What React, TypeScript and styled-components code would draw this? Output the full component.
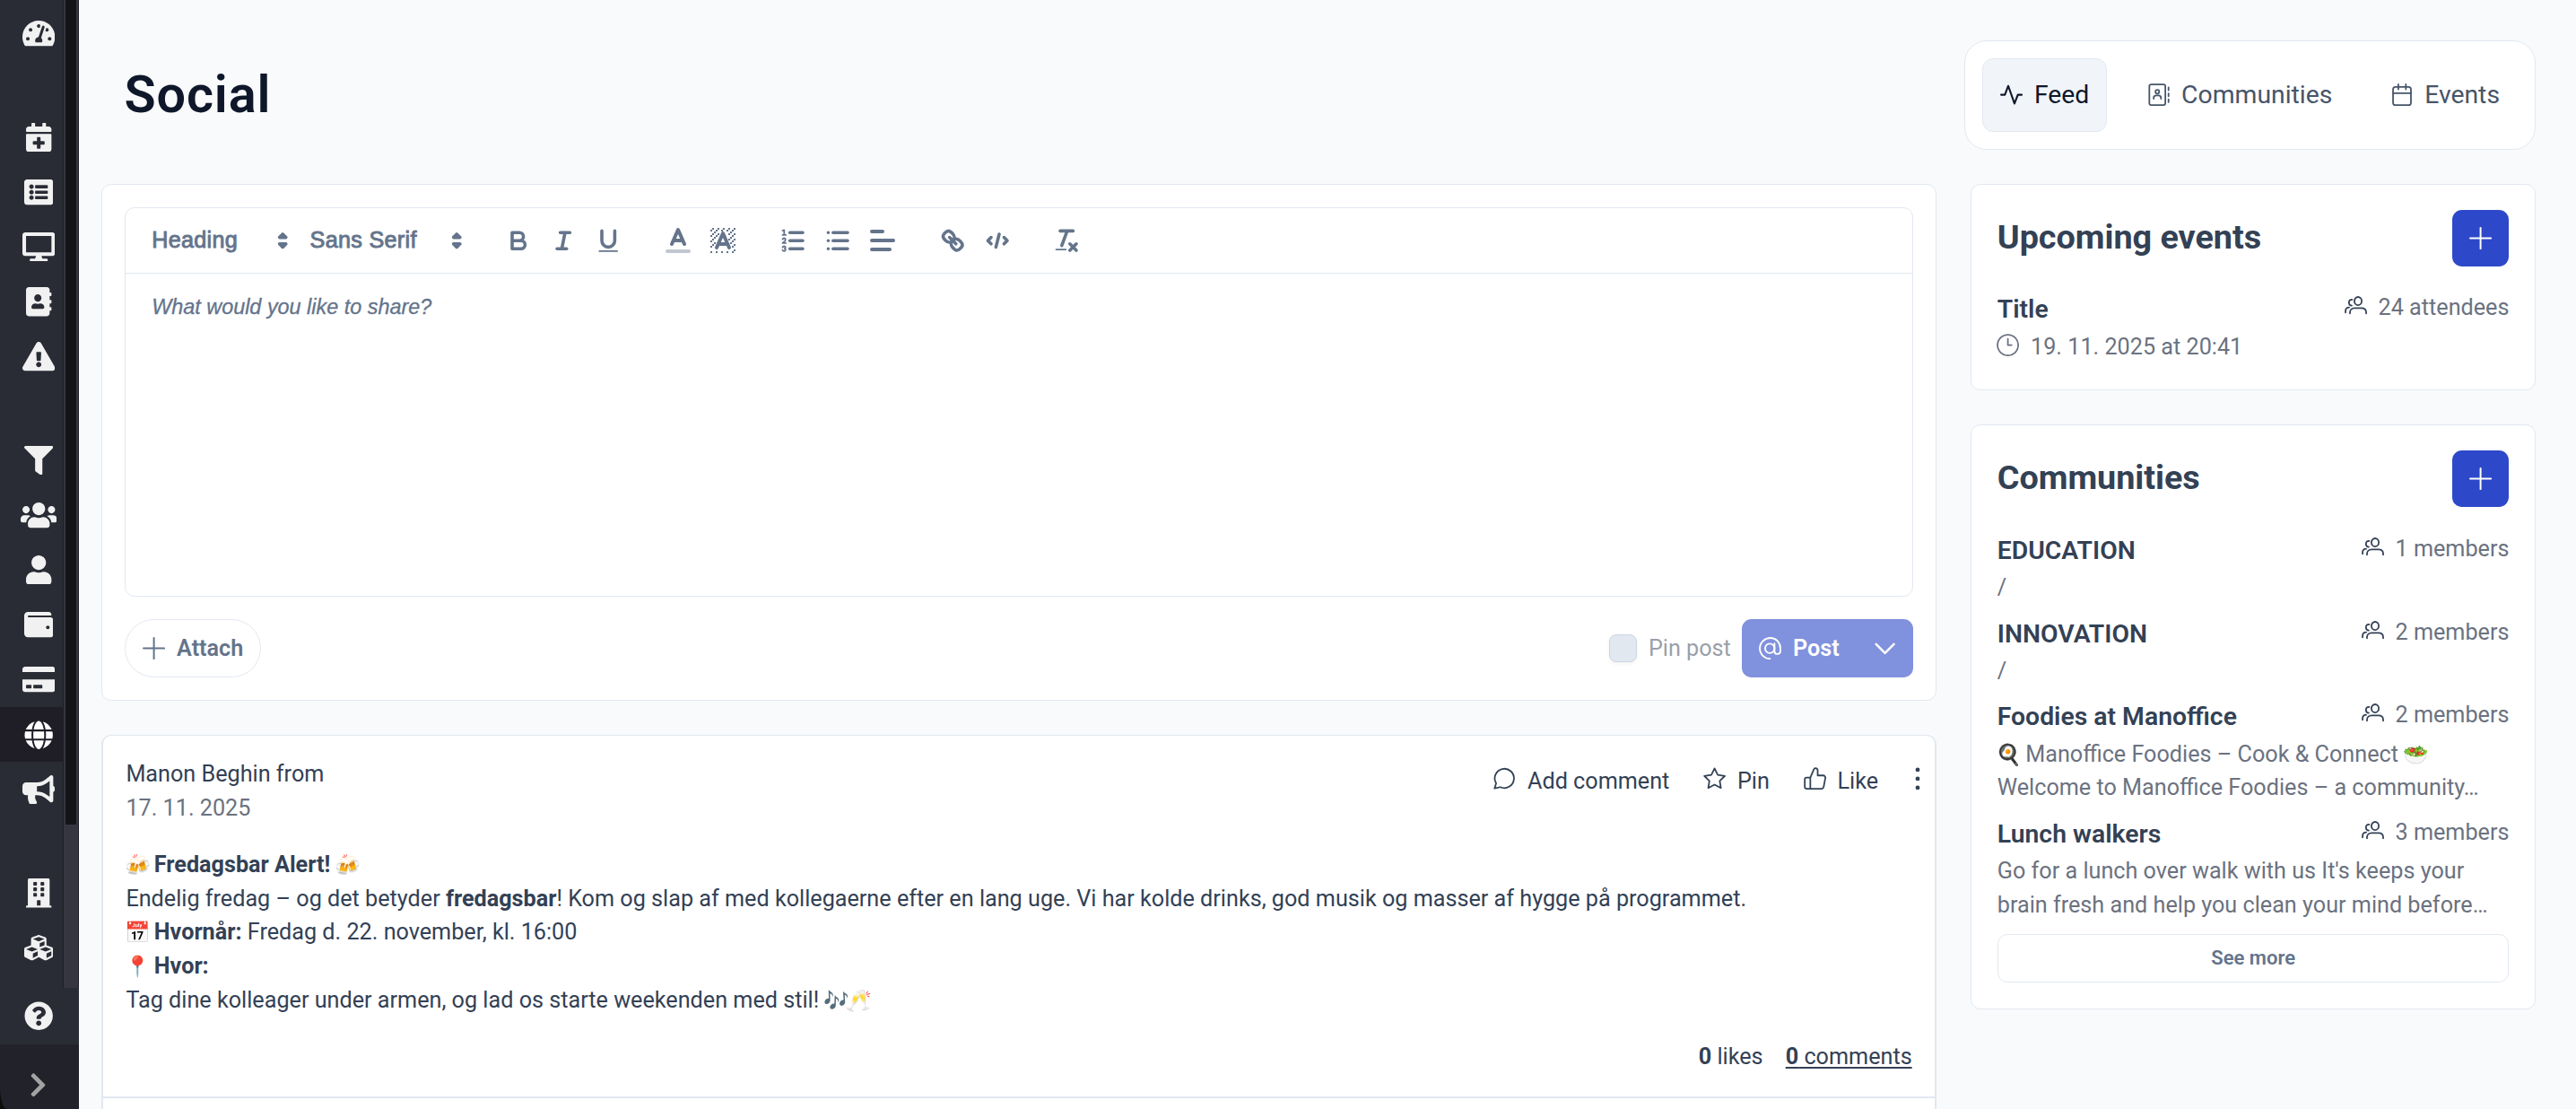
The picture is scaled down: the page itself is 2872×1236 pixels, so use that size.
import React from 'react';
import styled, { createGlobalStyle, css } from 'styled-components';
import {
  FaAddressBook,
  FaBuilding,
  FaBullhorn,
  FaCalendarPlus,
  FaChevronRight,
  FaCreditCard,
  FaCubes,
  FaDesktop,
  FaExclamationTriangle,
  FaFilter,
  FaGlobe,
  FaListAlt,
  FaQuestionCircle,
  FaTachometerAlt,
  FaUser,
  FaUsers,
  FaWallet,
} from 'react-icons/fa';

const GlobalStyle = createGlobalStyle`
  * {
    box-sizing: border-box;
  }
  body {
    margin: 0;
    background: #f8fafc;
    color: #334155;
    font-family: Roboto, 'Liberation Sans', sans-serif;
    font-size: 25.2px;
    line-height: 37.8px;
    overflow: hidden;
  }
  button {
    font-family: inherit;
    font-size: inherit;
    line-height: inherit;
    margin: 0;
  }
`;

const Layout = styled.div`
  display: flex;
  height: 1236px;
  overflow: hidden;
`;

/* Sidebar */

const Sidebar = styled.aside`
  display: flex;
  flex-direction: column;
  width: 88px;
  flex-shrink: 0;
  background: #2a2c35;
  color: #f1f1f1;
`;

const SidebarScroll = styled.div`
  display: flex;
  height: 1101px;
`;

const Nav = styled.nav`
  width: 70px;
  padding-top: 6.8px;
`;

const NavGroup = styled.div`
  margin-bottom: 54.4px;
`;

const navItem = css<{ $width?: number }>`
  display: flex;
  align-items: center;
  justify-content: center;
  padding: 0 0 0 16px;
  border: none;
  background: none;
  color: inherit;
  svg {
    height: 32.4px;
    width: ${({ $width = 32.4 }) => $width}px;
    flex-shrink: 0;
  }
`;

const NavItem = styled.button<{ $active?: boolean; $width?: number }>`
  ${navItem}
  width: 70px;
  height: 61.15px;
  ${({ $active }) => $active && 'background: #1f1e27; color: #fff;'}
`;

const Scrollbar = styled.div`
  width: 18px;
  padding: 0 3px 0 2px;
  background: #363641;
  border-left: 1px solid #1f1e27;
  border-right: 1px solid #1f1e27;
`;

const ScrollThumb = styled.div`
  width: 12px;
  height: 918.5px;
  background: #131418;
`;

const HelpItem = styled.button<{ $width?: number }>`
  ${navItem}
  width: 70px;
  height: 63px;
`;

const SidebarFooter = styled.div`
  background: #0d0d0c;
`;

const ExpandItem = styled.button`
  display: flex;
  align-items: center;
  padding: 19px 0 0 33px;
  width: 88px;
  height: 72px;
  border: none;
  background: #22222b;
  color: #a3a3a3;
  border-bottom-left-radius: 8px 24px;
  svg {
    width: 19px;
    height: 30.6px;
  }
`;

/* Page */

const Page = styled.main`
  flex: 1;
  padding: 45.4px 45.2px 0 25.2px;
`;

const PageHeader = styled.header`
  display: flex;
  align-items: center;
  justify-content: space-between;
  height: 121.2px;
  margin-bottom: 38.6px;
  padding-left: 25.2px;
`;

const PageTitle = styled.h1`
  margin: 0;
  color: #0f172a;
  font-size: 57.6px;
  font-weight: 600;
  line-height: 72px;
  letter-spacing: 0.9px;
`;

const Tabs = styled.div`
  display: flex;
  gap: 25.2px;
  height: 121.2px;
  padding: 18.9px;
  background: #fff;
  border: 1px solid #e2e8f0;
  border-radius: 25px;
`;

const Tab = styled.button<{ $active?: boolean }>`
  display: flex;
  align-items: center;
  gap: 12.6px;
  padding: 0 18.9px;
  border: 1px solid ${({ $active }) => ($active ? '#e2e8f0' : 'transparent')};
  border-radius: 12px;
  background: ${({ $active }) => ($active ? '#f1f5f9' : 'transparent')};
  color: ${({ $active }) => ($active ? '#0f172a' : '#475569')};
  font-size: 28.35px;
`;

const Columns = styled.div`
  display: flex;
  align-items: flex-start;
  gap: 38.6px;
`;

const FeedColumn = styled.div`
  flex: 1;
  min-width: 0;
`;

const SideColumn = styled.div`
  width: 629.4px;
  flex-shrink: 0;
  display: flex;
  flex-direction: column;
  gap: 38.6px;
`;

const Card = styled.section`
  background: #fff;
  border: 1px solid #e2e8f0;
  border-radius: 10.8px;
`;

/* Composer */

const Composer = styled(Card)`
  padding: 25.2px;
  margin-bottom: 38px;
`;

const Editor = styled.div`
  border: 1px solid #e2e8f0;
  border-radius: 10.8px;
  height: 433.5px;
  font-family: 'Liberation Sans', Arial, sans-serif;
  color: #64748b;
`;

const Toolbar = styled.div`
  display: flex;
  align-items: center;
  gap: 27px;
  height: 73px;
  padding: 0 14.4px;
  border-bottom: 1px solid #e2e8f0;
`;

const ToolGroup = styled.div`
  display: flex;
`;

const Picker = styled.div<{ $width: number }>`
  display: flex;
  align-items: center;
  justify-content: space-between;
  width: ${({ $width }) => $width}px;
  padding-left: 14.4px;
  letter-spacing: 0.3px;
  line-height: 36px;
  -webkit-text-stroke: 0.9px #64748b;
  svg {
    width: 32.4px;
    height: 32.4px;
  }
`;

const PickerLabel = styled.span`
  padding-bottom: 3.5px;
`;

const Tool = styled.button<{ $large?: boolean }>`
  display: flex;
  align-items: center;
  justify-content: center;
  width: 50.4px;
  height: 43.2px;
  padding: 0;
  border: none;
  background: none;
  color: inherit;
  svg {
    width: ${({ $large }) => ($large ? 36 : 32.4)}px;
    height: ${({ $large }) => ($large ? 36 : 32.4)}px;
  }
`;

const Placeholder = styled.div`
  padding: 19px 28.8px;
  font-size: 23.4px;
  font-style: italic;
  -webkit-text-stroke: 0.3px #64748b;
`;

const ComposerFooter = styled.div`
  display: flex;
  align-items: center;
  justify-content: space-between;
  margin-top: 25.2px;
`;

const AttachButton = styled.button`
  display: flex;
  align-items: center;
  gap: 12.6px;
  height: 64.8px;
  padding: 0 18.9px;
  border: 1px solid #e2e8f0;
  border-radius: 33px;
  background: #fff;
  color: #64748b;
  font-weight: 600;
`;

const Publish = styled.div`
  display: flex;
  align-items: center;
  gap: 12.6px;
`;

const Checkbox = styled.span`
  width: 31.5px;
  height: 31.5px;
  border: 1px solid #cbd5e1;
  border-radius: 8px;
  background: #e2e8f0;
  box-shadow: 0 2px 4px rgba(18, 18, 23, 0.05);
`;

const PinLabel = styled.label`
  color: #9a9fa9;
`;

const SplitButton = styled.div`
  display: flex;
  height: 64.8px;
  border-radius: 10.8px;
  background: #8091dd;
  color: #fff;
  font-weight: 600;
`;

const PostButton = styled.button`
  display: flex;
  align-items: center;
  gap: 12.6px;
  padding: 0 18.9px;
  border: none;
  background: none;
  color: inherit;
  font-weight: inherit;
`;

const PostMenuButton = styled.button`
  display: flex;
  align-items: center;
  justify-content: center;
  width: 63px;
  padding: 0;
  border: none;
  background: none;
  color: inherit;
`;

/* Feed post */

const PostCard = styled(Card)`
  border-width: 1px 2px;
  border-bottom: none;
  border-radius: 10.8px 10.8px 0 0;
`;

const PostBody = styled.div`
  height: 404px;
  padding: 24px 25.2px 0;
  border-bottom: 2px solid #e2e8f0;
`;

const PostHead = styled.div`
  display: flex;
  justify-content: space-between;
  margin-bottom: 25.2px;
`;

const Muted = styled.div`
  color: #6b7280;
`;

const PostActions = styled.div`
  display: flex;
  align-items: flex-start;
  gap: 37.8px;
  padding-top: 4.5px;
  margin-right: -13.2px;
`;

const PostAction = styled.button`
  display: flex;
  gap: 12.6px;
  height: 46px;
  padding: 3px 0 0;
  border: none;
  background: none;
  color: inherit;
  svg {
    margin-top: 3px;
  }
`;

const MoreButton = styled(PostAction)`
  width: 13px;
  justify-content: center;
`;

const PostText = styled.div`
  strong {
    font-weight: 700;
  }
`;

const EmojiBox = styled.span`
  display: inline-block;
  width: 25.2px;
  font-size: 23px;
  line-height: 24px;
  text-indent: -1.5px;
  white-space: nowrap;
`;

const PostStats = styled.div`
  display: flex;
  justify-content: flex-end;
  gap: 25.2px;
  margin-top: 25.2px;
  a {
    text-decoration: underline;
    text-decoration-thickness: 2px;
    text-underline-offset: 3px;
  }
`;

/* Side widgets */

const Widget = styled(Card)`
  padding: 27.9px 28.35px 28.35px;
`;

const WidgetHeader = styled.div`
  display: flex;
  align-items: center;
  justify-content: space-between;
  margin-bottom: 27.4px;
`;

const WidgetTitle = styled.h2`
  margin: 0;
  padding-bottom: 3px;
  font-size: 37.8px;
  font-weight: 700;
  line-height: 56px;
  letter-spacing: -0.05px;
`;

const AddButton = styled.button`
  display: flex;
  align-items: center;
  justify-content: center;
  width: 63px;
  height: 63px;
  padding: 0;
  border: none;
  border-radius: 10.8px;
  background: #2d49c9;
  color: #fff;
`;

const Entry = styled.div`
  & + & {
    margin-top: 11.9px;
  }
`;

const EntryHead = styled.div`
  display: flex;
  align-items: flex-start;
  justify-content: space-between;
  height: 43.2px;
`;

const EntryTitle = styled.h3`
  margin: 0;
  font-size: 28.35px;
  font-weight: 600;
  line-height: 42.5px;
`;

const EntryCount = styled.div`
  display: flex;
  gap: 12.6px;
  color: #6b7280;
  svg {
    color: #334155;
    margin-top: 5px;
  }
`;

const EntryText = styled.div`
  color: #6b7280;
  white-space: pre-line;
`;

const EntryDate = styled.div`
  display: flex;
  gap: 12.6px;
  margin-left: -0.5px;
  color: #6b7280;
  svg {
    margin-top: 4px;
  }
`;

const SeeMore = styled.button`
  display: block;
  width: 100%;
  height: 54px;
  margin-top: 13.4px;
  border: 1px solid #e2e8f0;
  border-radius: 10.8px;
  background: #fff;
  color: #64748b;
  font-size: 22.05px;
  font-weight: 600;
`;

/* Line icons, drawn on a 24 unit grid */

type IconProps = { children: React.ReactNode; width?: number };

const Icon: React.FC<IconProps> = ({ children, width = 1.7 }) => (
  <svg
    width="25.2"
    height="25.2"
    viewBox="0 0 24 24"
    fill="none"
    stroke="currentColor"
    strokeWidth={width}
    strokeLinecap="round"
    strokeLinejoin="round"
  >
    {children}
  </svg>
);

const PlusIcon = () => (
  <Icon width={1.9}>
    <path d="M12 1v22M1 12h22" />
  </Icon>
);

const ActivityIcon = () => (
  <Icon width={2}>
    <path d="M1 12h4l3.6-9.4 6.6 18.8L18.8 12H23" />
  </Icon>
);

const ContactsIcon = () => (
  <Icon>
    <rect x="2.2" y="1" width="17" height="22" rx="2" />
    <circle cx="10.7" cy="8.8" r="2" />
    <path d="M6.8 16.2v-.7c0-1.7 1.3-2.7 2.8-2.7h2.2c1.5 0 2.8 1 2.8 2.7v.7M22.6 4.2v3M22.6 10.5v3M22.6 16.8v3" />
  </Icon>
);

const CalendarIcon = () => (
  <Icon>
    <rect x="2.9" y="3.6" width="19" height="19.4" rx="2.6" />
    <path d="M2.900 10.400h19M8.500 .9v5.400M16.500 .9v5.400" />
  </Icon>
);

const PeopleIcon = () => (
  <Icon>
    <ellipse cx="14.3" cy="6.2" rx="3.9" ry="4.3" />
    <path d="M5.7 19.4v-1c0-3 2.2-4.8 5-4.8h7.2c2.9 0 5 1.8 5 4.8v1" />
    <path d="M8 4.7C6 4.7 4.6 6 4.6 7.9S6 11 7.6 11M1 18.4v-1.6c0-2.3 1.5-3.8 3.8-3.8" />
  </Icon>
);

const ClockIcon = () => (
  <Icon>
    <circle cx="12" cy="12" r="11" />
    <path d="M12 5.4V12h4" />
  </Icon>
);

const AtIcon = () => (
  <Icon width={1.8}>
    <circle cx="11.6" cy="12" r="5" />
    <path d="M16.6 6.8v8.4c0 1.7 1.2 2.8 3 2.8s3.2-1.1 3.2-3V12C22.8 5.6 18.2 1 12.2 1S1 5.700 1 12s4.800 11 10.800 11" />
  </Icon>
);

const ChevronIcon = () => (
  <Icon width={2.4}>
    <path d="M2.500 7.500 12 17l9.500-9.500" />
  </Icon>
);

const CommentIcon = () => (
  <Icon>
    <path d="M1.200 22.600 2.900 17.200A10.200 10.200 0 1 1 7.400 21.200Z" />
  </Icon>
);

const StarIcon = () => (
  <Icon>
    <path d="m12 1.300 3.400 6.900 7.500 1.100-5.400 5.300 1.200 7.500-6.700-3.500-6.700 3.500 1.200-7.500L1.100 9.300l7.500-1.100Z" />
  </Icon>
);

const ThumbIcon = () => (
  <Icon>
    <path d="M7 23H3.200C2 23 1.100 22 1.100 20.800v-7.600C1.100 12 2 11 3.200 11H7M7 23V11l3.700-8.400C11 1.600 11.600 1 12.400 1c1.500 0 2.400 1.200 2.400 2.600V8.800h5.800c1.600 0 2.700 1.400 2.300 3l-1.700 9c-.3 1.300-1.300 2.200-2.600 2.200Z" />
  </Icon>
);

const DotsIcon = () => (
  <svg width="6" height="26" viewBox="0 0 6 26" fill="currentColor">
    <circle cx="3" cy="2.9" r="2.4" />
    <circle cx="3" cy="12.9" r="2.4" />
    <circle cx="3" cy="22.9" r="2.4" />
  </svg>
);

/* Editor icons, drawn on an 18 unit grid */

const Glyph: React.FC<{ children: React.ReactNode }> = ({ children }) => (
  <svg
    viewBox="0 0 18 18"
    fill="none"
    stroke="currentColor"
    strokeWidth="2"
    strokeLinecap="round"
    strokeLinejoin="round"
  >
    {children}
  </svg>
);

const SortArrows = () => (
  <Glyph>
    <path d="M7 11l2 2 2-2ZM7 7l2-2 2 2Z" fill="currentColor" />
  </Glyph>
);

const BoldIcon = () => (
  <Glyph>
    <path d="M5 4h4.500a2.500 2.500 0 0 1 0 5H5ZM5 9h5.500a2.500 2.500 0 0 1 0 5H5Z" />
  </Glyph>
);

const ItalicIcon = () => (
  <Glyph>
    <path d="M7 4h6M5 14h6M8 14l2-10" />
  </Glyph>
);

const UnderlineIcon = () => (
  <Glyph>
    <path d="M5 3v6a4 4 0 0 0 8 0V3" />
    <rect x="3" y="15" width="12" height="1" rx="0.5" fill="currentColor" stroke="none" />
  </Glyph>
);

const ColorIcon = () => (
  <Glyph>
    <path d="M3 15h12" opacity="0.4" />
    <path d="M5.500 11 9 3l3.500 8M11.630 9H6.380" />
  </Glyph>
);

// Diagonal hatching, left empty where the letter shape sits
const hatch: [number, number][] = [];
for (let y = 2; y < 16; y += 1) {
  for (let x = 2; x < 16; x += 1) {
    const half = (y - 3) * 0.44 + 1.2;
    const covered = y > 3 && y < 15 && Math.abs(x + 0.5 - 9) < half;
    if ((x + y) % 3 === 2 && !covered) hatch.push([x, y]);
  }
}

const HighlightIcon = () => (
  <Glyph>
    {hatch.map(([x, y]) => (
      <rect key={`${x}-${y}`} x={x} y={y} width="1" height="1" fill="currentColor" stroke="none" />
    ))}
    <path d="M5.500 13 9 5l3.500 8M11.630 11H6.380" />
  </Glyph>
);

const OrderedIcon = () => (
  <Glyph>
    <path d="M7 4h8M7 9h8M7 14h8" />
    <path
      strokeWidth="1"
      d="M2.500 5.500h2M2.500 2.800l1-.4v3M4.500 10.500h-2c0-.23 1.850-1.080 1.850-2.230A.96.96 0 0 0 2.500 8.160M2.500 14.850a.96.96 0 0 0 1.850-.11A.7.7 0 0 0 3.750 14a.69.69 0 0 0 .6-.74.96.96 0 0 0-1.850-.1"
    />
  </Glyph>
);

const BulletIcon = () => (
  <Glyph>
    <path d="M6 4h9M6 9h9M6 14h9M3 4h0M3 9h0M3 14h0" />
  </Glyph>
);

const AlignIcon = () => (
  <Glyph>
    <path d="M3 9h12M3 14h10M3 4h6" />
  </Glyph>
);

const LinkIcon = () => (
  <Glyph>
    <path d="M7 7l4 4" />
    <path d="M8.900 4.577a3.476 3.476 0 0 1 .36 4.679A3.476 3.476 0 0 1 4.577 8.900C3.185 7.500 2.035 6.400 4.217 4.217S7.500 3.185 8.900 4.577Z" />
    <path d="M13.423 9.100a3.476 3.476 0 0 0-4.679-.36 3.476 3.476 0 0 0 .36 4.679c1.392 1.392 2.500 2.542 4.679.36S14.815 10.500 13.423 9.100Z" />
  </Glyph>
);

const CodeIcon = () => (
  <Glyph>
    <path d="M5 7 3 9l2 2M13 7l2 2-2 2M10 5 8 13" />
  </Glyph>
);

const CleanIcon = () => (
  <Glyph>
    <path d="M5 3h8M6 12l3.350-9M11 11l4 4M15 11l-4 4" />
    <rect x="2" y="14" width="7" height="1" rx="0.5" fill="currentColor" stroke="none" />
  </Glyph>
);

const Emoji: React.FC<{ children: string }> = ({ children }) => <EmojiBox>{children}</EmojiBox>;

const navGroups = [
  [{ icon: FaTachometerAlt, width: 36.4 }],
  [
    { icon: FaCalendarPlus },
    { icon: FaListAlt },
    { icon: FaDesktop, width: 36.4 },
    { icon: FaAddressBook },
    { icon: FaExclamationTriangle, width: 36.4 },
  ],
  [
    { icon: FaFilter },
    { icon: FaUsers, width: 40.5 },
    { icon: FaUser },
    { icon: FaWallet },
    { icon: FaCreditCard, width: 36.4 },
    { icon: FaGlobe, active: true },
    { icon: FaBullhorn, width: 36.4 },
  ],
  [{ icon: FaBuilding }, { icon: FaCubes }],
] as { icon: React.ComponentType; width?: number; active?: boolean }[][];

const tools = [
  [BoldIcon, ItalicIcon, UnderlineIcon],
  [ColorIcon, HighlightIcon],
  [OrderedIcon, BulletIcon, AlignIcon],
  [LinkIcon, CodeIcon],
  [CleanIcon],
];

const largeTools = [ColorIcon, HighlightIcon, AlignIcon];

const communities = [
  { name: 'EDUCATION', members: 1, text: '/' },
  { name: 'INNOVATION', members: 2, text: '/' },
  {
    name: 'Foodies at Manoffice',
    members: 2,
    text: (
      <>
        <Emoji>🍳</Emoji> Manoffice Foodies – Cook &amp; Connect <Emoji>🥗</Emoji>
        <br />
        Welcome to Manoffice Foodies – a community…
      </>
    ),
  },
  {
    name: 'Lunch walkers',
    members: 3,
    text: "Go for a lunch over walk with us It's keeps your\nbrain fresh and help you clean your mind before…",
  },
];

const App: React.FC = () => (
  <>
    <GlobalStyle />
    <Layout>
      <Sidebar>
        <SidebarScroll>
          <Nav>
            {navGroups.map((group, index) => (
              <NavGroup key={index}>
                {group.map(({ icon: NavIcon, width, active }, i) => (
                  <NavItem key={i} $active={active} $width={width}>
                    <NavIcon />
                  </NavItem>
                ))}
              </NavGroup>
            ))}
          </Nav>
          <Scrollbar>
            <ScrollThumb />
          </Scrollbar>
        </SidebarScroll>
        <HelpItem>
          <FaQuestionCircle />
        </HelpItem>
        <SidebarFooter>
          <ExpandItem>
            <FaChevronRight />
          </ExpandItem>
        </SidebarFooter>
      </Sidebar>

      <Page>
        <PageHeader>
          <PageTitle>Social</PageTitle>
          <Tabs>
            <Tab $active>
              <ActivityIcon />
              Feed
            </Tab>
            <Tab>
              <ContactsIcon />
              Communities
            </Tab>
            <Tab>
              <CalendarIcon />
              Events
            </Tab>
          </Tabs>
        </PageHeader>

        <Columns>
          <FeedColumn>
            <Composer>
              <Editor>
                <Toolbar>
                  <ToolGroup>
                    <Picker $width={176.4}>
                      <PickerLabel>Heading</PickerLabel>
                      <SortArrows />
                    </Picker>
                    <Picker $width={194.4}>
                      <PickerLabel>Sans Serif</PickerLabel>
                      <SortArrows />
                    </Picker>
                  </ToolGroup>
                  {tools.map((group, index) => (
                    <ToolGroup key={index}>
                      {group.map((ToolIcon, i) => (
                        <Tool key={i} $large={largeTools.includes(ToolIcon)}>
                          <ToolIcon />
                        </Tool>
                      ))}
                    </ToolGroup>
                  ))}
                </Toolbar>
                <Placeholder>What would you like to share?</Placeholder>
              </Editor>
              <ComposerFooter>
                <AttachButton>
                  <PlusIcon />
                  Attach
                </AttachButton>
                <Publish>
                  <Checkbox />
                  <PinLabel>Pin post</PinLabel>
                  <SplitButton>
                    <PostButton>
                      <AtIcon />
                      Post
                    </PostButton>
                    <PostMenuButton>
                      <ChevronIcon />
                    </PostMenuButton>
                  </SplitButton>
                </Publish>
              </ComposerFooter>
            </Composer>

            <PostCard>
              <PostBody>
                <PostHead>
                  <div>
                    <div>Manon Beghin from</div>
                    <Muted>17. 11. 2025</Muted>
                  </div>
                  <PostActions>
                    <PostAction>
                      <CommentIcon />
                      Add comment
                    </PostAction>
                    <PostAction>
                      <StarIcon />
                      Pin
                    </PostAction>
                    <PostAction>
                      <ThumbIcon />
                      Like
                    </PostAction>
                    <MoreButton>
                      <DotsIcon />
                    </MoreButton>
                  </PostActions>
                </PostHead>
                <PostText>
                  <Emoji>🍻</Emoji> <strong>Fredagsbar Alert!</strong> <Emoji>🍻</Emoji>
                  <br />
                  Endelig fredag – og det betyder <strong>fredagsbar</strong>! Kom og slap af med
                  kollegaerne efter en lang uge. Vi har kolde drinks, god musik og masser af hygge
                  på programmet.
                  <br />
                  <Emoji>📅</Emoji> <strong>Hvornår:</strong> Fredag d. 22. november, kl. 16:00
                  <br />
                  <Emoji>📍</Emoji> <strong>Hvor:</strong>
                  <br />
                  Tag dine kolleager under armen, og lad os starte weekenden med stil!{' '}
                  <Emoji>🎶</Emoji>
                  <Emoji>🥂</Emoji>
                </PostText>
                <PostStats>
                  <span>
                    <b>0</b> likes
                  </span>
                  <a>
                    <b>0</b> comments
                  </a>
                </PostStats>
              </PostBody>
              <PostBody />
            </PostCard>
          </FeedColumn>

          <SideColumn>
            <Widget>
              <WidgetHeader>
                <WidgetTitle>Upcoming events</WidgetTitle>
                <AddButton>
                  <PlusIcon />
                </AddButton>
              </WidgetHeader>
              <Entry>
                <EntryHead>
                  <EntryTitle>Title</EntryTitle>
                  <EntryCount>
                    <PeopleIcon />
                    24 attendees
                  </EntryCount>
                </EntryHead>
                <EntryDate>
                  <ClockIcon />
                  19. 11. 2025 at 20:41
                </EntryDate>
              </Entry>
            </Widget>

            <Widget>
              <WidgetHeader>
                <WidgetTitle>Communities</WidgetTitle>
                <AddButton>
                  <PlusIcon />
                </AddButton>
              </WidgetHeader>
              {communities.map(({ name, members, text }) => (
                <Entry key={name}>
                  <EntryHead>
                    <EntryTitle>{name}</EntryTitle>
                    <EntryCount>
                      <PeopleIcon />
                      {members} members
                    </EntryCount>
                  </EntryHead>
                  <EntryText>{text}</EntryText>
                </Entry>
              ))}
              <SeeMore>See more</SeeMore>
            </Widget>
          </SideColumn>
        </Columns>
      </Page>
    </Layout>
  </>
);

export default App;
